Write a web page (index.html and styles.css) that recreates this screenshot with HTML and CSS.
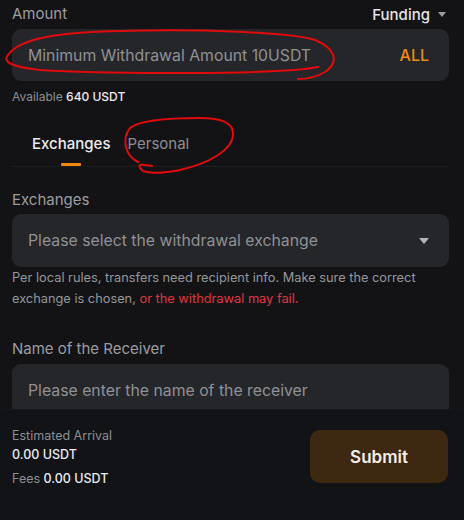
FILE: index.html
```html
<!DOCTYPE html>
<html>
<head>
<meta charset="utf-8">
<link rel="stylesheet" href="styles.css">
</head>
<body>
<div class="page">
  <div class="main">
    <div class="row-head">
      <span class="label">Amount</span>
      <span class="funding">Funding <span class="caret small"></span></span>
    </div>
    <div class="field">
      <span class="ph">Minimum Withdrawal Amount 10USDT</span>
      <span class="all">ALL</span>
    </div>
    <div class="avail"><span class="muted">Available</span> <span class="strong">640 USDT</span></div>
    <div class="tabs">
      <div class="tab active">Exchanges<span class="bar"></span></div>
      <div class="tab">Personal</div>
    </div>
    <div class="label block">Exchanges</div>
    <div class="field select">
      <span class="ph">Please select the withdrawal exchange</span>
      <span class="caret"></span>
    </div>
    <p class="help">Per local rules, transfers need recipient info. Make sure the correct<br>exchange is chosen, <span class="warn">or the withdrawal may fail.</span></p>
    <div class="label block receiver">Name of the Receiver</div>
    <div class="field">
      <span class="ph">Please enter the name of the receiver</span>
    </div>
  </div>
  <div class="footer">
    <div class="summary">
      <div class="muted">Estimated Arrival</div>
      <div class="strong">0.00 USDT</div>
      <div class="fees"><span class="muted">Fees</span> <span class="strong">0.00 USDT</span></div>
    </div>
    <button class="submit">Submit</button>
  </div>
  <svg class="marks" width="464" height="520" viewBox="0 0 464 520">
    <path d="M318 67 C280 75 100 74 40 70 C12 67 2 62 8 55 C20 38 60 32 120 31 C200 29 290 32 315 40 C335 48 340 62 325 72 C315 78 305 79 298 79" />
    <path d="M152 166 C145 165 137 163 140 168 C143 174 160 174 180 170 C210 163 232 150 233 135 C234 122 220 118 200 118 C170 118 140 120 130 128 C122 138 124 155 138 162" />
  </svg>
</div>
</body>
</html>
```
FILE: styles.css
```css
html, body {
  margin: 0;
  padding: 0;
  background: #131316;
}
.page {
  position: relative;
  width: 464px;
  height: 520px;
  display: flex;
  flex-direction: column;
  font-family: Inter, "Noto Sans", sans-serif;
  color: #e6e6e8;
  overflow: hidden;
}
.main {
  height: 410px;
  flex-shrink: 0;
  overflow: hidden;
  padding: 4px 15px 0 12px;
  box-sizing: border-box;
}
.row-head {
  display: flex;
  justify-content: space-between;
  align-items: center;
  height: 20px;
}
.label {
  font-size: 15px;
  line-height: 20px;
  color: #9b9da1;
}
.funding {
  font-size: 15px;
  font-weight: 500;
  color: #e4e4e6;
  display: flex;
  align-items: center;
  gap: 8px;
  padding-right: 3px;
}
.caret {
  width: 0;
  height: 0;
  border-left: 5px solid transparent;
  border-right: 5px solid transparent;
  border-top: 6px solid #b4b5b8;
}
.caret.small {
  border-left-width: 4px;
  border-right-width: 4px;
  border-top-width: 5px;
  border-top-color: #9c9da0;
}
.field {
  margin-top: 5px;
  height: 52px;
  background: #25262a;
  border-radius: 9px;
  display: flex;
  align-items: center;
  justify-content: space-between;
  padding: 0 20px 0 16px;
  flex-shrink: 0;
}
.ph {
  font-size: 15.8px;
  color: #8f9195;
}
.all {
  font-size: 16px;
  font-weight: 500;
  color: #ee8a10;
}
.select {
  height: 53px;
  margin-top: 4px;
}
.avail {
  margin-top: 8px;
  font-size: 12px;
  line-height: 16px;
}
.muted {
  color: #8c8e92;
}
.strong {
  color: #ececee;
  font-weight: 500;
}
.tabs {
  display: flex;
  gap: 17px;
  padding-left: 20px;
  height: 62px;
  box-sizing: border-box;
  align-items: flex-end;
  border-bottom: 1px solid #1d1e21;
}
.tab {
  position: relative;
  font-size: 15px;
  line-height: 20px;
  color: #8d8f93;
  padding-bottom: 12px;
}
.tab.active {
  color: #ececee;
  font-weight: 500;
}
.bar {
  position: absolute;
  left: 50%;
  bottom: 0;
  width: 20px;
  height: 3px;
  margin-left: -10px;
  background: #f0870c;
  border-radius: 1px;
}
.block {
  margin-top: 23px;
}
.help {
  margin: 0;
  font-size: 12.8px;
  line-height: 21px;
  color: #95979b;
}
.warn {
  color: #e2343d;
}
.receiver {
  margin-top: 30px;
}
.footer {
  flex: 1;
  background: #121317;
  box-shadow: 0 -1px 0 #17181b;
  display: flex;
  justify-content: space-between;
  align-items: flex-start;
  padding: 16px 16px 0 12px;
}
.summary {
  font-size: 12.5px;
  line-height: 19px;
}
.fees {
  margin-top: 5px;
}
.submit {
  margin-top: 4px;
  width: 138px;
  height: 53px;
  border: none;
  border-radius: 10px;
  background: #3e2812;
  color: #f2eee8;
  font-family: Inter, "Noto Sans", sans-serif;
  font-size: 17px;
  font-weight: 600;
}
.marks {
  position: absolute;
  left: 0;
  top: 0;
  pointer-events: none;
}
.marks path {
  fill: none;
  stroke: #e20a0a;
  stroke-width: 2;
  stroke-linecap: round;
}
```
